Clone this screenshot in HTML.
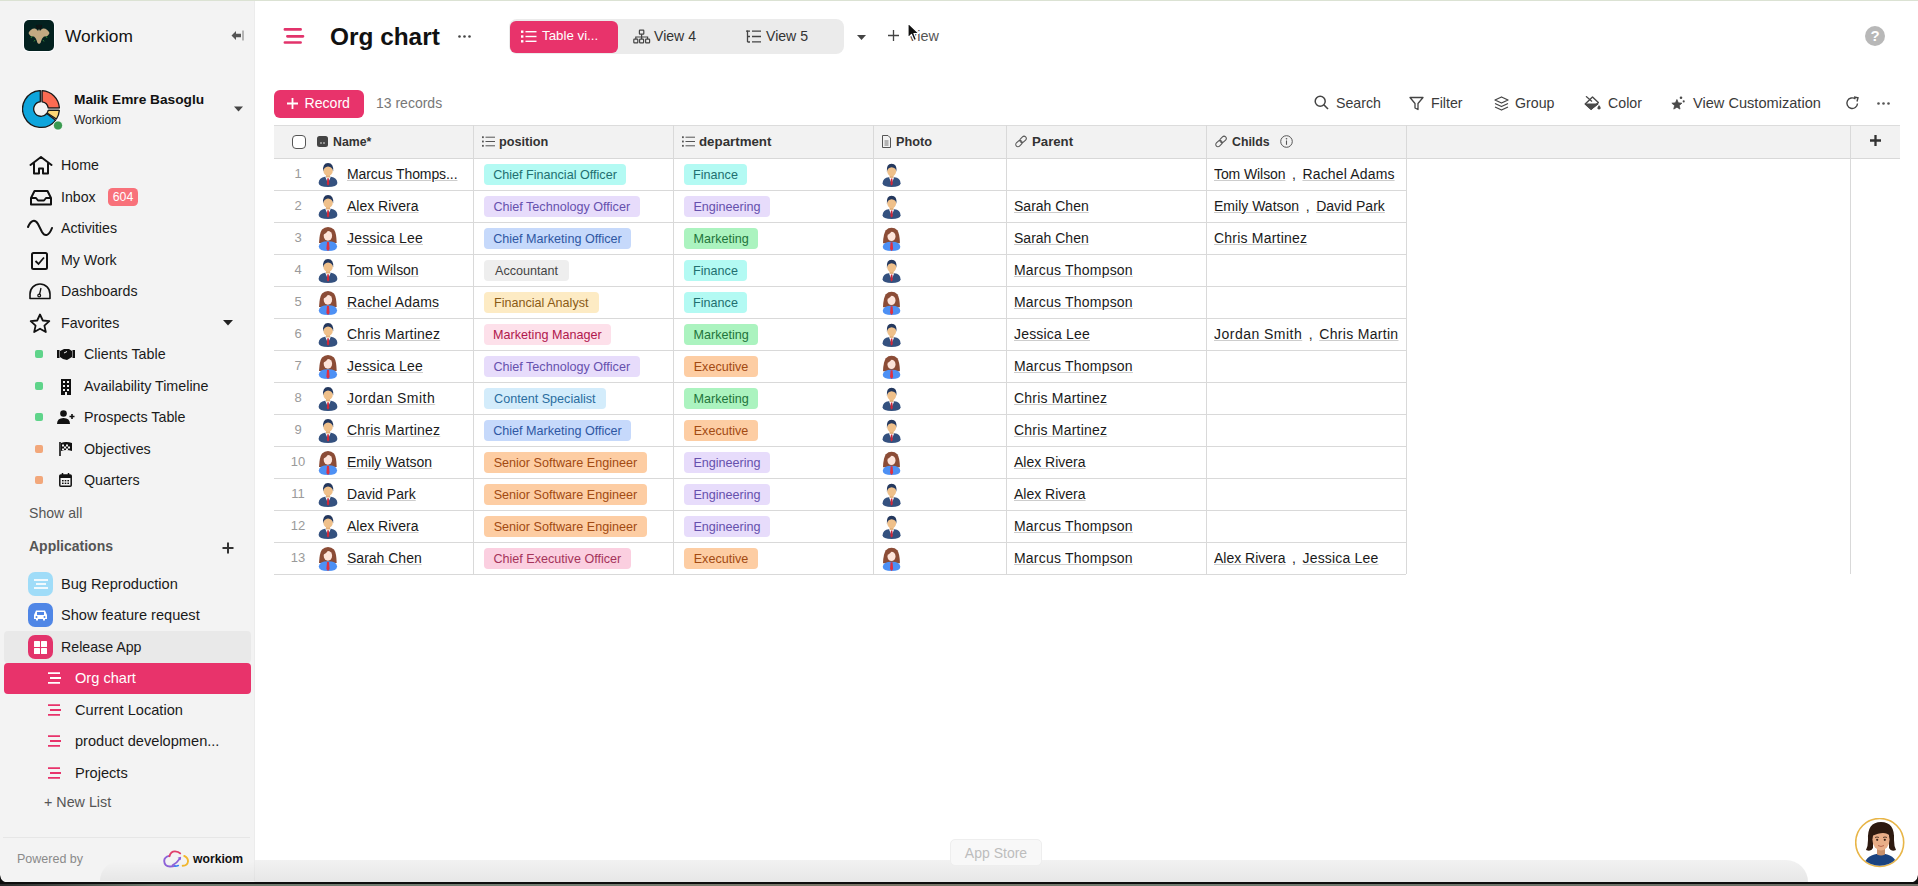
<!DOCTYPE html>
<html><head><meta charset="utf-8"><style>
*{box-sizing:border-box;margin:0;padding:0}
html,body{width:1918px;height:886px;overflow:hidden;background:#fff}
body{font-family:"Liberation Sans",sans-serif;color:#1f1f1f;position:relative}
.a{position:absolute;white-space:nowrap}
svg{display:block}
#sb{position:absolute;left:0;top:0;width:255px;height:886px;background:#f3f3f3}
.nav{font-size:14px;color:#1a1a1a;line-height:16px}
.tag{position:absolute;height:21px;line-height:21px;border-radius:4px;font-size:12.6px;padding:0 9px}
.th{position:absolute;top:126px;height:32px;line-height:32px;font-size:12.8px;font-weight:bold;color:#333}
.cell{position:absolute;font-size:14px;line-height:16px;color:#1a1a1a}
.ul{text-decoration:underline;text-decoration-color:#cdcdcd;text-decoration-thickness:1px;text-underline-offset:0.5px}
.num{position:absolute;font-size:13px;color:#9a9a9a;line-height:16px;text-align:center;width:30px}
.tb{font-size:14px;color:#3a3a3a;line-height:16px}
</style></head>
<body>
<div class="a" style="left:0;top:0;width:1918px;height:1px;background:#dbe2d3;z-index:5"></div>
<div id="sb"></div>
<div class="a" style="left:254px;top:0;width:1px;height:886px;background:#ececec"></div>
<div class="a" style="left:24px;top:20px;width:30px;height:31px;background:#03211f;border-radius:5px;box-shadow:0 0 0 1px #fdfdff;padding:1px">
<svg width="28" height="29" viewBox="0 2 28 29"><path d="M3.5 14 Q6 9 10 9.5 Q12 10 13 12 L14 10 L15 12 Q16 10 18 9.5 Q22 9 24.5 14 Q23 18 19 17.5 Q17 19 16.5 21 L15.5 24 L14 25 L12.5 24 L11.5 21 Q11 19 9 17.5 Q5 18 3.5 14Z" fill="#c2a882"/><path d="M11.5 6 l1.2 4 M14 5.5 v4 M16.5 6 l-1.2 4" stroke="#111" stroke-width="1.3"/><path d="M7 17 l-1 2 M21 17 l1 2 M10 21 l-1 1.5 M18 21 l1 1.5" stroke="#3a8a3a" stroke-width="0.9"/></svg></div>
<div class="a" style="left:65px;top:26px;font-size:17.3px;color:#111;line-height:20px">Workiom</div>
<div class="a" style="left:231px;top:30px;"><svg width="13" height="11" viewBox="0 0 13 11"><path d="M0.5 5.5 L5 1 V3.8 H10 V7.2 H5 V10 Z" fill="#555"/><rect x="11.5" y="0.5" width="1" height="10" fill="#777"/></svg></div>
<div class="a" style="left:22px;top:90px;"><svg width="42" height="42" viewBox="0 0 42 42">
<circle cx="19" cy="19" r="20" fill="#f6f6f6"/>
<circle cx="19" cy="19" r="18.2" fill="#b8b8b8"/>
<circle cx="19" cy="19" r="7.5" fill="#f2f2f2"/>
<path d="M18.3 0.61 A18.4 18.4 0 1 0 33.5 30.33 L24.75 23.5 A7.3 7.3 0 1 1 18.3 11.73 Z" fill="#0ea5dc" stroke="#1a1a1a" stroke-width="1.3" stroke-linejoin="round"/>
<path d="M20.1 0.63 A18.4 18.4 0 0 1 37.37 17.9 H26.22 A7.3 7.3 0 0 0 20.1 11.78Z" fill="#fb6b52" stroke="#1a1a1a" stroke-width="1.3" stroke-linejoin="round"/>
<path d="M37.35 20.4 A18.4 18.4 0 0 1 34.43 29.02 L25.12 22.98 A7.3 7.3 0 0 0 26.16 20.4Z" fill="#fdd675" stroke="#1a1a1a" stroke-width="1.3" stroke-linejoin="round"/>
<circle cx="36" cy="35.5" r="4.6" fill="#3a9a50" stroke="#fff" stroke-width="0.8"/>
</svg></div>
<div class="a" style="left:74px;top:92px;font-size:13.7px;font-weight:bold;color:#111;line-height:16px">Malik Emre Basoglu</div>
<div class="a" style="left:74px;top:113px;font-size:12px;color:#222;line-height:14px">Workiom</div>
<div class="a" style="left:234px;top:106px;"><svg width="9" height="6" viewBox="0 0 9 6"><path d="M0 0.5 H9 L4.5 5.5Z" fill="#444"/></svg></div>
<div class="a" style="left:61px;top:157px;font-size:14.2px;color:#1a1a1a;line-height:16px">Home</div>
<div class="a" style="left:29px;top:156px;"><svg width="24" height="20" viewBox="0 0 24 20"><path d="M1.5 9 L12 1 L22.5 9 M5 7.5 V17.5 H10 V12.5 H14 V17.5 H19 V7.5" fill="none" stroke="#111" stroke-width="2" stroke-linejoin="round" stroke-linecap="round"/></svg></div>
<div class="a" style="left:61px;top:189px;font-size:14.2px;color:#1a1a1a;line-height:16px">Inbox</div>
<div class="a" style="left:29px;top:189px;"><svg width="24" height="18" viewBox="0 0 24 18"><path d="M2 9 L5.5 2 H18.5 L22 9 V15.5 H2 Z M2 9 H7 L9 11.5 H15 L17 9 H22" fill="none" stroke="#111" stroke-width="2" stroke-linejoin="round"/></svg></div>
<div class="a" style="left:61px;top:220px;font-size:14.2px;color:#1a1a1a;line-height:16px">Activities</div>
<div class="a" style="left:27px;top:218px;"><svg width="26" height="20" viewBox="0 0 26 20"><path d="M1 9 C4 2 8 1 11 6 L15 14 C18 19 22 18 25 10" fill="none" stroke="#111" stroke-width="2" stroke-linecap="round"/></svg></div>
<div class="a" style="left:61px;top:252px;font-size:14.2px;color:#1a1a1a;line-height:16px">My Work</div>
<div class="a" style="left:30px;top:251px;"><svg width="20" height="20" viewBox="0 0 20 20"><rect x="2" y="2" width="15" height="16" rx="1.5" fill="none" stroke="#111" stroke-width="2"/><path d="M5.5 10 L8.5 13 L14 6.5" fill="none" stroke="#111" stroke-width="1.8"/></svg></div>
<div class="a" style="left:61px;top:283px;font-size:14.2px;color:#1a1a1a;line-height:16px">Dashboards</div>
<div class="a" style="left:28px;top:281px;"><svg width="24" height="20" viewBox="0 0 24 20"><path d="M2 17.5 V13 A10 10 0 0 1 22 13 V17.5 Z" fill="none" stroke="#111" stroke-width="1.6" stroke-linejoin="round"/><path d="M13 7 L11.5 13.5" stroke="#111" stroke-width="1.3"/><circle cx="11.2" cy="14.5" r="1.4" fill="none" stroke="#111" stroke-width="1.2"/></svg></div>
<div class="a" style="left:61px;top:315px;font-size:14.2px;color:#1a1a1a;line-height:16px">Favorites</div>
<div class="a" style="left:29px;top:313px;"><svg width="22" height="21" viewBox="0 0 22 21"><path d="M11 1.5 L13.8 7.5 L20.3 8.2 L15.4 12.6 L16.8 19 L11 15.7 L5.2 19 L6.6 12.6 L1.7 8.2 L8.2 7.5 Z" fill="none" stroke="#111" stroke-width="1.8" stroke-linejoin="round"/></svg></div>
<div class="a" style="left:108px;top:188px;width:30px;height:18px;line-height:19px;border-radius:4.5px;background:#f8717a;color:#fff;font-size:12.3px;text-align:center">604</div>
<div class="a" style="left:223px;top:320px;"><svg width="10" height="6" viewBox="0 0 10 6"><path d="M0 0 H10 L5 5.5Z" fill="#222"/></svg></div>
<div class="a" style="left:35px;top:350px;width:8px;height:8px;border-radius:2px;background:#5fd48a"></div>
<div class="a" style="left:57px;top:347px;"><svg width="18" height="14" viewBox="0 0 18 14"><rect x="0" y="3" width="2.5" height="8" fill="#111"/><rect x="15.5" y="3" width="2.5" height="8" fill="#111"/><path d="M3 4 L7 2 L12 2 L15 4 V10 L10 13 L6 12 L3 10Z" fill="#111"/><path d="M7 6 L10 4.5" stroke="#f2f2f2" stroke-width="1"/></svg></div>
<div class="a" style="left:84px;top:346px;font-size:14.3px;color:#1a1a1a;line-height:16px">Clients Table</div>
<div class="a" style="left:35px;top:382px;width:8px;height:8px;border-radius:2px;background:#5fd48a"></div>
<div class="a" style="left:59px;top:379px;"><svg width="14" height="16" viewBox="0 0 14 16"><rect x="2" y="0" width="10" height="16" fill="#111"/><g fill="#f2f2f2"><rect x="4" y="2" width="2" height="2"/><rect x="8" y="2" width="2" height="2"/><rect x="4" y="6" width="2" height="2"/><rect x="8" y="6" width="2" height="2"/><rect x="4" y="10" width="2" height="2"/><rect x="8" y="10" width="2" height="2"/><rect x="6" y="13" width="2" height="3"/></g></svg></div>
<div class="a" style="left:84px;top:378px;font-size:14.3px;color:#1a1a1a;line-height:16px">Availability Timeline</div>
<div class="a" style="left:35px;top:413px;width:8px;height:8px;border-radius:2px;background:#5fd48a"></div>
<div class="a" style="left:57px;top:410px;"><svg width="18" height="14" viewBox="0 0 18 14"><circle cx="6.5" cy="3.5" r="3.3" fill="#111"/><path d="M0 14 Q0 8 6.5 8 Q13 8 13 14Z" fill="#111"/><path d="M12.5 6.5 H17.5 M15 4 V9" stroke="#111" stroke-width="1.6"/></svg></div>
<div class="a" style="left:84px;top:409px;font-size:14.3px;color:#1a1a1a;line-height:16px">Prospects Table</div>
<div class="a" style="left:35px;top:445px;width:8px;height:8px;border-radius:2px;background:#f2a77a"></div>
<div class="a" style="left:59px;top:442px;"><svg width="14" height="14" viewBox="0 0 14 14"><path d="M1 0 V14" stroke="#111" stroke-width="1.6"/><path d="M2 1 Q7 -1 13 1 V9 Q7 7 2 9Z" fill="#111"/><g fill="#f2f2f2"><rect x="3" y="2.5" width="2" height="2"/><rect x="7" y="2.5" width="2" height="2"/><rect x="5" y="4.5" width="2" height="2"/><rect x="9" y="4.5" width="2" height="2"/><rect x="3" y="6.5" width="2" height="1.5"/><rect x="7" y="6.5" width="2" height="1.5"/></g></svg></div>
<div class="a" style="left:84px;top:441px;font-size:14.3px;color:#1a1a1a;line-height:16px">Objectives</div>
<div class="a" style="left:35px;top:476px;width:8px;height:8px;border-radius:2px;background:#f2a77a"></div>
<div class="a" style="left:59px;top:473px;"><svg width="13" height="14" viewBox="0 0 13 14"><rect x="0.8" y="2" width="11.4" height="11.2" rx="1" fill="none" stroke="#111" stroke-width="1.5"/><rect x="0.8" y="2" width="11.4" height="3" fill="#111"/><path d="M3.5 0 V3 M9.5 0 V3" stroke="#111" stroke-width="1.5"/><g fill="#111"><rect x="3" y="7" width="1.6" height="1.4"/><rect x="5.7" y="7" width="1.6" height="1.4"/><rect x="8.4" y="7" width="1.6" height="1.4"/><rect x="3" y="9.6" width="1.6" height="1.4"/><rect x="5.7" y="9.6" width="1.6" height="1.4"/><rect x="8.4" y="9.6" width="1.6" height="1.4"/></g></svg></div>
<div class="a" style="left:84px;top:472px;font-size:14.3px;color:#1a1a1a;line-height:16px">Quarters</div>
<div class="a" style="left:29px;top:505px;font-size:14.1px;color:#555;line-height:16px">Show all</div>
<div class="a" style="left:29px;top:538px;font-size:14px;font-weight:bold;color:#555;line-height:16px">Applications</div>
<div class="a" style="left:222px;top:542px;"><svg width="12" height="12" viewBox="0 0 12 12"><path d="M6 0.5 V11.5 M0.5 6 H11.5" stroke="#333" stroke-width="2"/></svg></div>
<div class="a" style="left:4px;top:631px;width:247px;height:32px;background:#e9e9e9;border-radius:4px"></div>
<div class="a" style="left:4px;top:663px;width:247px;height:31px;background:#e8336b;border-radius:4px"></div>
<div class="a" style="left:28px;top:572px;"><div style="width:25px;height:24px;border-radius:7px;background:#9fdcf8;display:flex;align-items:center;justify-content:center"><svg width="14" height="10" viewBox="0 0 14 10"><path d="M0 1 H14 M2 5 H12 M0 9 H14" stroke="#fff" stroke-width="1.8" opacity="0.85"/></svg></div></div>
<div class="a" style="left:61px;top:576px;font-size:14.6px;color:#1a1a1a;line-height:16px">Bug Reproduction</div>
<div class="a" style="left:28px;top:603px;"><div style="width:25px;height:24px;border-radius:7px;background:#4f86e6;display:flex;align-items:center;justify-content:center"><svg width="15" height="12" viewBox="0 0 15 12"><path d="M1 6 L3 1.5 H12 L14 6 V10 H12 V11.5 H10 V10 H5 V11.5 H3 V10 H1 Z" fill="#fff"/><rect x="4" y="3" width="7" height="3" fill="#4f86e6"/><circle cx="3.5" cy="8" r="1" fill="#4f86e6"/><circle cx="11.5" cy="8" r="1" fill="#4f86e6"/></svg></div></div>
<div class="a" style="left:61px;top:607px;font-size:14.6px;color:#1a1a1a;line-height:16px">Show feature request</div>
<div class="a" style="left:28px;top:635px;"><div style="width:25px;height:24px;border-radius:7px;background:#e3336b;display:flex;align-items:center;justify-content:center"><svg width="13" height="13" viewBox="0 0 13 13"><rect x="0" y="0" width="6" height="6" rx="0.5" fill="#fff"/><rect x="7" y="0" width="6" height="6" rx="0.5" fill="#fff"/><rect x="0" y="7" width="6" height="6" rx="0.5" fill="#fff"/><rect x="7" y="7" width="6" height="6" rx="0.5" fill="#fff"/></svg></div></div>
<div class="a" style="left:61px;top:639px;font-size:14.2px;color:#1a1a1a;line-height:16px">Release App</div>
<div class="a" style="left:47px;top:672px;"><svg width="15" height="12" viewBox="0 0 15 12"><path d="M1 1.2 H13 M3 6 H14 M1 10.8 H13" stroke="#fff" stroke-width="1.8"/></svg></div>
<div class="a" style="left:75px;top:670px;font-size:14.6px;color:#fff;line-height:16px">Org chart</div>
<div class="a" style="left:47px;top:704px;"><svg width="15" height="12" viewBox="0 0 15 12"><path d="M1 1.2 H13 M3 6 H14 M1 10.8 H13" stroke="#e8336b" stroke-width="1.8"/></svg></div>
<div class="a" style="left:75px;top:702px;font-size:14.6px;color:#1a1a1a;line-height:16px">Current Location</div>
<div class="a" style="left:47px;top:735px;"><svg width="15" height="12" viewBox="0 0 15 12"><path d="M1 1.2 H13 M3 6 H14 M1 10.8 H13" stroke="#e8336b" stroke-width="1.8"/></svg></div>
<div class="a" style="left:75px;top:733px;font-size:14.6px;color:#1a1a1a;line-height:16px">product developmen...</div>
<div class="a" style="left:47px;top:767px;"><svg width="15" height="12" viewBox="0 0 15 12"><path d="M1 1.2 H13 M3 6 H14 M1 10.8 H13" stroke="#e8336b" stroke-width="1.8"/></svg></div>
<div class="a" style="left:75px;top:765px;font-size:14.6px;color:#1a1a1a;line-height:16px">Projects</div>
<div class="a" style="left:44px;top:794px;font-size:14.3px;color:#555;line-height:16px">+ New List</div>
<div class="a" style="left:3px;top:837px;width:247px;height:1px;background:#e6e6e6"></div>
<div class="a" style="left:17px;top:852px;font-size:12.5px;color:#8a8a8a;line-height:14px">Powered by</div>
<div class="a" style="left:163px;top:850px;"><svg width="27" height="19" viewBox="0 0 27 19"><path d="M6.4 5.9 Q1.2 7 1.2 11 Q1.5 16.5 7 16.5 Q10 16.5 11.8 15.8" fill="none" stroke="#8e62d9" stroke-width="1.9" stroke-linecap="round"/><path d="M6.4 6.2 Q8 1.3 12 1.4 Q15.5 1.6 17.2 3.4" fill="none" stroke="#e0406a" stroke-width="1.9" stroke-linecap="round"/><path d="M9.5 15.3 Q14 13 17.3 8" fill="none" stroke="#8e62d9" stroke-width="1.7" stroke-linecap="round"/><path d="M14.6 7.8 L18 6.7 L17.6 10.3Z" fill="#8e62d9"/><path d="M11.8 16.1 Q13.5 16.3 15.3 15.5" fill="none" stroke="#3b82f6" stroke-width="1.6" stroke-linecap="round"/><path d="M21.2 5.9 Q25.2 8 25 11.5 Q24.5 15.5 19.7 15.8" fill="none" stroke="#f2b72c" stroke-width="1.9" stroke-linecap="round"/></svg></div>
<div class="a" style="left:193px;top:852px;font-size:12.2px;font-weight:bold;color:#111;line-height:14px">workiom</div>
<div class="a" style="left:283px;top:27px;"><svg width="22" height="18" viewBox="0 0 22 18"><path d="M1.9 2.4 H17.6 M4.4 9.3 H20 M1.9 15.5 H17.6" stroke="#e2336b" stroke-width="2.7" stroke-linecap="round"/></svg></div>
<div class="a" style="left:330px;top:23px;font-size:24.4px;font-weight:bold;color:#111;line-height:28px">Org chart</div>
<div class="a" style="left:458px;top:35px;"><svg width="13" height="3" viewBox="0 0 13 3"><circle cx="1.5" cy="1.5" r="1.3" fill="#444"/><circle cx="6.5" cy="1.5" r="1.3" fill="#444"/><circle cx="11.5" cy="1.5" r="1.3" fill="#444"/></svg></div>
<div class="a" style="left:509px;top:19px;width:335px;height:35px;background:#ebebeb;border-radius:8px"></div>
<div class="a" style="left:510px;top:21px;width:108px;height:32px;background:#e8336b;border-radius:6px"></div>
<div class="a" style="left:521px;top:30px;"><svg width="16" height="13" viewBox="0 0 16 13"><g fill="#fff"><rect x="0" y="0.5" width="2.4" height="2.4"/><rect x="0" y="5.3" width="2.4" height="2.4"/><rect x="0" y="10.1" width="2.4" height="2.4"/><rect x="4.5" y="1" width="11" height="1.4"/><rect x="4.5" y="5.8" width="11" height="1.4"/><rect x="4.5" y="10.6" width="11" height="1.4"/></g></svg></div>
<div class="a" style="left:542px;top:28px;font-size:13.3px;color:#fff;line-height:16px">Table vi...</div>
<div class="a" style="left:633px;top:29px;"><svg width="18" height="15" viewBox="0 0 18 15"><rect x="6.4" y="1.2" width="4.4" height="4" rx="0.6" fill="none" stroke="#444" stroke-width="1.2"/><path d="M8.6 5.2 V8 M2.8 10 V8 H14.6 V10 M8.6 8 V10" fill="none" stroke="#444" stroke-width="1.2"/><rect x="0.8" y="10.2" width="4" height="3.6" rx="0.6" fill="none" stroke="#444" stroke-width="1.2"/><rect x="6.6" y="10.2" width="4" height="3.6" rx="0.6" fill="none" stroke="#444" stroke-width="1.2"/><rect x="12.6" y="10.2" width="4" height="3.6" rx="0.6" fill="none" stroke="#444" stroke-width="1.2"/></svg></div>
<div class="a" style="left:654px;top:28px;font-size:14.1px;color:#333;line-height:16px">View 4</div>
<div class="a" style="left:746px;top:30px;"><svg width="15" height="13" viewBox="0 0 15 13"><path d="M1.5 0.5 V12 M1.5 6.5 H4 M1.5 12 H4" fill="none" stroke="#444" stroke-width="1.3"/><path d="M0 1.2 H4 M6 1.2 H15 M6 6.5 H15 M6 11.8 H15" stroke="#444" stroke-width="1.3"/></svg></div>
<div class="a" style="left:766px;top:28px;font-size:14.1px;color:#333;line-height:16px">View 5</div>
<div class="a" style="left:857px;top:35px;"><svg width="9" height="5" viewBox="0 0 9 5"><path d="M0 0 H9 L4.5 5Z" fill="#444"/></svg></div>
<div class="a" style="left:888px;top:30px;"><svg width="11" height="11" viewBox="0 0 11 11"><path d="M5.5 0 V11 M0 5.5 H11" stroke="#444" stroke-width="1.3"/></svg></div>
<div class="a" style="left:908px;top:28px;font-size:14.4px;color:#555;line-height:16px">View</div>
<div class="a" style="left:907px;top:22px;"><svg width="14" height="20" viewBox="0 0 14 20"><path d="M1 1 L1 16 L4.5 12.5 L7 18.5 L9.5 17.5 L7 11.5 L12 11.5 Z" fill="#111" stroke="#fff" stroke-width="1.2" stroke-linejoin="round"/></svg></div>
<div class="a" style="left:1865px;top:26px;"><div style="width:20px;height:20px;border-radius:50%;background:#b8b8b8;color:#fff;font-size:15px;font-weight:bold;text-align:center;line-height:20px">?</div></div>
<div class="a" style="left:274px;top:90px;"><div style="width:90px;height:28px;border-radius:6px;background:#e8336b;position:relative"><svg style="position:absolute;left:13px;top:8px" width="11" height="11" viewBox="0 0 11 11"><path d="M5.5 0 V11 M0 5.5 H11" stroke="#fff" stroke-width="1.8"/></svg><span style="position:absolute;left:30.5px;top:5px;font-size:14.1px;color:#fff;line-height:16px">Record</span></div></div>
<div class="a" style="left:376px;top:95px;font-size:14px;color:#777;line-height:16px">13 records</div>
<div class="a" style="left:1314px;top:95px;"><svg width="15" height="15" viewBox="0 0 15 15"><circle cx="6.2" cy="6.2" r="5" fill="none" stroke="#444" stroke-width="1.5"/><path d="M9.8 9.8 L14 14" stroke="#444" stroke-width="1.6"/></svg></div>
<div class="a" style="left:1336px;top:95px;font-size:14.2px;color:#3a3a3a;line-height:16px">Search</div>
<div class="a" style="left:1409px;top:96px;"><svg width="15" height="15" viewBox="0 0 15 15"><path d="M1 1.5 H14 L9 7.5 V13.5 L6 12 V7.5 Z" fill="none" stroke="#444" stroke-width="1.3" stroke-linejoin="round"/></svg></div>
<div class="a" style="left:1431px;top:95px;font-size:14.2px;color:#3a3a3a;line-height:16px">Filter</div>
<div class="a" style="left:1494px;top:96px;"><svg width="15" height="15" viewBox="0 0 15 15"><path d="M7.5 1 L14 4 L7.5 7 L1 4 Z" fill="none" stroke="#444" stroke-width="1.3" stroke-linejoin="round"/><path d="M1 7.5 L7.5 10.5 L14 7.5 M1 11 L7.5 14 L14 11" fill="none" stroke="#444" stroke-width="1.3" stroke-linejoin="round"/></svg></div>
<div class="a" style="left:1515px;top:95px;font-size:14.2px;color:#3a3a3a;line-height:16px">Group</div>
<div class="a" style="left:1584px;top:96px;"><svg width="17" height="15" viewBox="0 0 17 15"><path d="M1.2 8 L8.5 0.9 L14.3 6.6 L7.1 13.2 Z" fill="none" stroke="#4a4a4a" stroke-width="1.4" stroke-linejoin="round"/><path d="M1 8 H14.2 L7.1 13.4 Z" fill="#4a4a4a" stroke="#4a4a4a" stroke-width="1" stroke-linejoin="round"/><path d="M2 0.3 L8 5.6" stroke="#4a4a4a" stroke-width="1.3"/><path d="M15 8.9 Q17.2 11.6 16.6 12.6 Q15 14.3 13.4 12.6 Q12.9 11.6 15 8.9Z" fill="#4a4a4a"/></svg></div>
<div class="a" style="left:1608px;top:95px;font-size:14.2px;color:#3a3a3a;line-height:16px">Color</div>
<div class="a" style="left:1671px;top:96px;"><svg width="16" height="15" viewBox="0 0 16 15"><path d="M5.90 3.50 L7.31 6.86 L10.94 7.16 L8.18 9.54 L9.02 13.09 L5.90 11.20 L2.78 13.09 L3.62 9.54 L0.86 7.16 L4.49 6.86Z" fill="#4a4a4a" stroke="#4a4a4a" stroke-width="0.8" stroke-linejoin="round"/><circle cx="10" cy="1.7" r="1.3" fill="#4a4a4a"/><circle cx="12.7" cy="5.4" r="1.05" fill="#4a4a4a"/></svg></div>
<div class="a" style="left:1693px;top:95px;font-size:14.6px;color:#3a3a3a;line-height:16px">View Customization</div>
<div class="a" style="left:1845px;top:96px;"><svg width="15" height="15" viewBox="0 0 15 15"><path d="M12.5 7.5 A5.3 5.3 0 1 1 10.5 3" fill="none" stroke="#444" stroke-width="1.4"/><path d="M9 1 L13 1.8 L12 5.5" fill="none" stroke="#444" stroke-width="1.4"/></svg></div>
<div class="a" style="left:1877px;top:102px;"><svg width="13" height="3" viewBox="0 0 13 3"><circle cx="1.5" cy="1.5" r="1.3" fill="#555"/><circle cx="6.5" cy="1.5" r="1.3" fill="#555"/><circle cx="11.5" cy="1.5" r="1.3" fill="#555"/></svg></div>
<div class="a" style="left:274px;top:125px;width:1626px;height:34px;background:#f2f2f2;border-top:1px solid #dcdcdc;border-bottom:1px solid #d8d8d8"></div>
<div class="a" style="left:473px;top:125px;width:1px;height:449px;background:#d9d9d9"></div>
<div class="a" style="left:673px;top:125px;width:1px;height:449px;background:#d9d9d9"></div>
<div class="a" style="left:873px;top:125px;width:1px;height:449px;background:#d9d9d9"></div>
<div class="a" style="left:1006px;top:125px;width:1px;height:449px;background:#d9d9d9"></div>
<div class="a" style="left:1206px;top:125px;width:1px;height:449px;background:#d9d9d9"></div>
<div class="a" style="left:1406px;top:125px;width:1px;height:449px;background:#d9d9d9"></div>
<div class="a" style="left:1850px;top:125px;width:1px;height:449px;background:#d9d9d9"></div>
<div class="a" style="left:274px;top:190px;width:1132px;height:1px;background:#d9d9d9"></div>
<div class="a" style="left:274px;top:222px;width:1132px;height:1px;background:#d9d9d9"></div>
<div class="a" style="left:274px;top:254px;width:1132px;height:1px;background:#d9d9d9"></div>
<div class="a" style="left:274px;top:286px;width:1132px;height:1px;background:#d9d9d9"></div>
<div class="a" style="left:274px;top:318px;width:1132px;height:1px;background:#d9d9d9"></div>
<div class="a" style="left:274px;top:350px;width:1132px;height:1px;background:#d9d9d9"></div>
<div class="a" style="left:274px;top:382px;width:1132px;height:1px;background:#d9d9d9"></div>
<div class="a" style="left:274px;top:414px;width:1132px;height:1px;background:#d9d9d9"></div>
<div class="a" style="left:274px;top:446px;width:1132px;height:1px;background:#d9d9d9"></div>
<div class="a" style="left:274px;top:478px;width:1132px;height:1px;background:#d9d9d9"></div>
<div class="a" style="left:274px;top:510px;width:1132px;height:1px;background:#d9d9d9"></div>
<div class="a" style="left:274px;top:542px;width:1132px;height:1px;background:#d9d9d9"></div>
<div class="a" style="left:274px;top:574px;width:1132px;height:1px;background:#d9d9d9"></div>
<div class="a" style="left:292px;top:135px;width:14px;height:14px;border:1px solid #555;border-radius:4px;background:#fff"></div>
<div class="a" style="left:317px;top:136px;"><svg width="11" height="11" viewBox="0 0 11 11"><rect width="11" height="11" rx="2.5" fill="#444"/><path d="M3 7 H5 M6 7 H8" stroke="#ddd" stroke-width="1.2"/></svg></div>
<div class="a" style="left:333px;top:126px;font-size:12.3px;font-weight:bold;color:#333;line-height:32px">Name*</div>
<div class="a" style="left:482px;top:136px;"><svg width="13" height="11" viewBox="0 0 13 11"><g fill="#555"><rect x="0" y="0.3" width="1.8" height="1.8"/><rect x="0" y="4.6" width="1.8" height="1.8"/><rect x="0" y="8.9" width="1.8" height="1.8"/></g><path d="M3.5 1.2 H13 M3.5 5.5 H13 M3.5 9.8 H13" stroke="#555" stroke-width="1"/></svg></div>
<div class="a" style="left:499px;top:126px;font-size:12.7px;font-weight:bold;color:#333;line-height:32px">position</div>
<div class="a" style="left:682px;top:136px;"><svg width="13" height="11" viewBox="0 0 13 11"><g fill="#555"><rect x="0" y="0.3" width="1.8" height="1.8"/><rect x="0" y="4.6" width="1.8" height="1.8"/><rect x="0" y="8.9" width="1.8" height="1.8"/></g><path d="M3.5 1.2 H13 M3.5 5.5 H13 M3.5 9.8 H13" stroke="#555" stroke-width="1"/></svg></div>
<div class="a" style="left:699px;top:126px;font-size:13.3px;font-weight:bold;color:#333;line-height:32px">department</div>
<div class="a" style="left:882px;top:135px;"><svg width="9" height="13" viewBox="0 0 9 13"><path d="M0.5 0.5 H6 L8.5 3 V12.5 H0.5 Z" fill="none" stroke="#555" stroke-width="1"/><path d="M2.5 6 H6.5 M2.5 8 H6.5 M2.5 10 H6.5" stroke="#555" stroke-width="0.8"/></svg></div>
<div class="a" style="left:896px;top:126px;font-size:12.7px;font-weight:bold;color:#333;line-height:32px">Photo</div>
<div class="a" style="left:1014px;top:135px;"><svg width="14" height="13" viewBox="0 0 14 13"><g transform="rotate(-45 7 6.5)"><rect x="0.5" y="4.3" width="7.2" height="4.4" rx="2.2" fill="none" stroke="#555" stroke-width="1.05"/><rect x="6.3" y="4.3" width="7.2" height="4.4" rx="2.2" fill="none" stroke="#555" stroke-width="1.05"/></g></svg></div>
<div class="a" style="left:1032px;top:126px;font-size:13.2px;font-weight:bold;color:#333;line-height:32px">Parent</div>
<div class="a" style="left:1214px;top:135px;"><svg width="14" height="13" viewBox="0 0 14 13"><g transform="rotate(-45 7 6.5)"><rect x="0.5" y="4.3" width="7.2" height="4.4" rx="2.2" fill="none" stroke="#555" stroke-width="1.05"/><rect x="6.3" y="4.3" width="7.2" height="4.4" rx="2.2" fill="none" stroke="#555" stroke-width="1.05"/></g></svg></div>
<div class="a" style="left:1232px;top:126px;font-size:12.3px;font-weight:bold;color:#333;line-height:32px">Childs</div>
<div class="a" style="left:1280px;top:135px;"><svg width="13" height="13" viewBox="0 0 13 13"><circle cx="6.5" cy="6.5" r="5.8" fill="none" stroke="#555" stroke-width="1"/><circle cx="6.5" cy="3.8" r="0.8" fill="#555"/><path d="M6.5 5.5 V9.8" stroke="#555" stroke-width="1.1"/></svg></div>
<div class="a" style="left:1870px;top:135px;"><svg width="11" height="11" viewBox="0 0 11 11"><path d="M5.5 0.3 V10.7 M0.3 5.5 H10.7" stroke="#333" stroke-width="2.3" stroke-linecap="round"/></svg></div>
<div class="a" style="left:283px;top:166px;width:30px;text-align:center;font-size:13px;color:#9a9a9a;line-height:16px">1</div>
<div class="a" style="left:318px;top:161px;"><svg width="24" height="26" viewBox="4 1 24 26"><path d="M4.6 23 Q5 17.5 11 16.8 H17 Q23 17.5 23.4 23 Q23 27 14 27 Q5 27 4.6 23Z" fill="#34517f"/><path d="M11.2 16.8 H16.8 L14 23Z" fill="#fff"/><path d="M13.3 18.3 H14.8 L15.3 24 L14 25.8 L12.8 24Z" fill="#cf2839"/><rect x="12" y="13" width="4" height="4.5" fill="#e3ae78"/><ellipse cx="14.1" cy="10.4" rx="4.7" ry="5.4" fill="#efc08a"/><path d="M9.1 11.5 Q8.3 2.9 14 2.9 Q19.9 2.9 19.2 11.5 Q18.6 6.6 14 6.4 Q9.8 6.6 9.1 11.5Z" fill="#24385e"/></svg></div>
<div class="a" style="left:347px;top:166px;font-size:14px;color:#1a1a1a;line-height:16px"><span class="ul" style="letter-spacing:-0.082px;">Marcus Thomps...</span></div>
<div class="a" style="left:484px;top:164px;width:142px;text-align:center;height:21px;line-height:23px;border-radius:4px;background:#b3faf3;color:#226f70;font-size:12.6px">Chief Financial Officer</div>
<div class="a" style="left:684px;top:164px;width:63px;text-align:center;height:21px;line-height:23px;border-radius:4px;background:#b3faf3;color:#226f70;font-size:12.6px">Finance</div>
<div class="a" style="left:882px;top:162px;"><svg width="23" height="25" viewBox="4 1 24 26"><path d="M4.6 23 Q5 17.5 11 16.8 H17 Q23 17.5 23.4 23 Q23 27 14 27 Q5 27 4.6 23Z" fill="#34517f"/><path d="M11.2 16.8 H16.8 L14 23Z" fill="#fff"/><path d="M13.3 18.3 H14.8 L15.3 24 L14 25.8 L12.8 24Z" fill="#cf2839"/><rect x="12" y="13" width="4" height="4.5" fill="#e3ae78"/><ellipse cx="14.1" cy="10.4" rx="4.7" ry="5.4" fill="#efc08a"/><path d="M9.1 11.5 Q8.3 2.9 14 2.9 Q19.9 2.9 19.2 11.5 Q18.6 6.6 14 6.4 Q9.8 6.6 9.1 11.5Z" fill="#24385e"/></svg></div>
<div class="a" style="left:1214px;top:166px;font-size:14px;color:#1a1a1a;line-height:16px;width:192px;height:19px;overflow:hidden"><span class="ul" style="letter-spacing:-0.092px;">Tom Wilson</span><span style="display:inline-block;width:17px;text-align:center">,</span><span class="ul" style="letter-spacing:0.159px;">Rachel Adams</span></div>
<div class="a" style="left:283px;top:198px;width:30px;text-align:center;font-size:13px;color:#9a9a9a;line-height:16px">2</div>
<div class="a" style="left:318px;top:193px;"><svg width="24" height="26" viewBox="4 1 24 26"><path d="M4.6 23 Q5 17.5 11 16.8 H17 Q23 17.5 23.4 23 Q23 27 14 27 Q5 27 4.6 23Z" fill="#34517f"/><path d="M11.2 16.8 H16.8 L14 23Z" fill="#fff"/><path d="M13.3 18.3 H14.8 L15.3 24 L14 25.8 L12.8 24Z" fill="#cf2839"/><rect x="12" y="13" width="4" height="4.5" fill="#e3ae78"/><ellipse cx="14.1" cy="10.4" rx="4.7" ry="5.4" fill="#efc08a"/><path d="M9.1 11.5 Q8.3 2.9 14 2.9 Q19.9 2.9 19.2 11.5 Q18.6 6.6 14 6.4 Q9.8 6.6 9.1 11.5Z" fill="#24385e"/></svg></div>
<div class="a" style="left:347px;top:198px;font-size:14px;color:#1a1a1a;line-height:16px"><span class="ul" style="letter-spacing:-0.006px;">Alex Rivera</span></div>
<div class="a" style="left:484px;top:196px;width:155.5px;text-align:center;height:21px;line-height:23px;border-radius:4px;background:#e7dcfb;color:#6650ad;font-size:12.6px">Chief Technology Officer</div>
<div class="a" style="left:684px;top:196px;width:86px;text-align:center;height:21px;line-height:23px;border-radius:4px;background:#e7dcfb;color:#6650ad;font-size:12.6px">Engineering</div>
<div class="a" style="left:882px;top:194px;"><svg width="23" height="25" viewBox="4 1 24 26"><path d="M4.6 23 Q5 17.5 11 16.8 H17 Q23 17.5 23.4 23 Q23 27 14 27 Q5 27 4.6 23Z" fill="#34517f"/><path d="M11.2 16.8 H16.8 L14 23Z" fill="#fff"/><path d="M13.3 18.3 H14.8 L15.3 24 L14 25.8 L12.8 24Z" fill="#cf2839"/><rect x="12" y="13" width="4" height="4.5" fill="#e3ae78"/><ellipse cx="14.1" cy="10.4" rx="4.7" ry="5.4" fill="#efc08a"/><path d="M9.1 11.5 Q8.3 2.9 14 2.9 Q19.9 2.9 19.2 11.5 Q18.6 6.6 14 6.4 Q9.8 6.6 9.1 11.5Z" fill="#24385e"/></svg></div>
<div class="a" style="left:1014px;top:198px;font-size:14px;color:#1a1a1a;line-height:16px"><span class="ul" style="letter-spacing:0.001px;">Sarah Chen</span></div>
<div class="a" style="left:1214px;top:198px;font-size:14px;color:#1a1a1a;line-height:16px;width:192px;height:19px;overflow:hidden"><span class="ul" style="letter-spacing:0.005px;">Emily Watson</span><span style="display:inline-block;width:17px;text-align:center">,</span><span class="ul" style="letter-spacing:0.027px;">David Park</span></div>
<div class="a" style="left:283px;top:230px;width:30px;text-align:center;font-size:13px;color:#9a9a9a;line-height:16px">3</div>
<div class="a" style="left:318px;top:225px;"><svg width="24" height="26" viewBox="4 1 24 26"><path d="M5 19 Q5.5 9 8 5.5 Q10.5 2.9 14 2.9 Q17.5 2.9 20 5.5 Q22.5 9 22.7 19Z" fill="#8b4c36"/><path d="M4.8 22.5 Q5.2 17.3 14 17.3 Q22.8 17.3 23.1 22.5 Q23 27 14 27 Q5 27 4.8 22.5Z" fill="#4d90f4"/><path d="M13 18 H15 L15.6 25 L14 27 L12.4 25Z" fill="#e0303f"/><ellipse cx="13.9" cy="11.8" rx="4.2" ry="4.9" fill="#fde4da"/><path d="M9.6 10.5 Q10 6 14.2 6.4 Q12.5 9 9.6 10.5Z" fill="#8b4c36"/></svg></div>
<div class="a" style="left:347px;top:230px;font-size:14px;color:#1a1a1a;line-height:16px"><span class="ul" style="letter-spacing:0.189px;">Jessica Lee</span></div>
<div class="a" style="left:484px;top:228px;width:147px;text-align:center;height:21px;line-height:23px;border-radius:4px;background:#c6d9fb;color:#2f57a3;font-size:12.6px">Chief Marketing Officer</div>
<div class="a" style="left:684px;top:228px;width:74.3px;text-align:center;height:21px;line-height:23px;border-radius:4px;background:#abf3bf;color:#1f733b;font-size:12.6px">Marketing</div>
<div class="a" style="left:882px;top:226px;"><svg width="23" height="25" viewBox="4 1 24 26"><path d="M5 19 Q5.5 9 8 5.5 Q10.5 2.9 14 2.9 Q17.5 2.9 20 5.5 Q22.5 9 22.7 19Z" fill="#8b4c36"/><path d="M4.8 22.5 Q5.2 17.3 14 17.3 Q22.8 17.3 23.1 22.5 Q23 27 14 27 Q5 27 4.8 22.5Z" fill="#4d90f4"/><path d="M13 18 H15 L15.6 25 L14 27 L12.4 25Z" fill="#e0303f"/><ellipse cx="13.9" cy="11.8" rx="4.2" ry="4.9" fill="#fde4da"/><path d="M9.6 10.5 Q10 6 14.2 6.4 Q12.5 9 9.6 10.5Z" fill="#8b4c36"/></svg></div>
<div class="a" style="left:1014px;top:230px;font-size:14px;color:#1a1a1a;line-height:16px"><span class="ul" style="letter-spacing:0.001px;">Sarah Chen</span></div>
<div class="a" style="left:1214px;top:230px;font-size:14px;color:#1a1a1a;line-height:16px;width:192px;height:19px;overflow:hidden"><span class="ul" style="letter-spacing:0.215px;">Chris Martinez</span></div>
<div class="a" style="left:283px;top:262px;width:30px;text-align:center;font-size:13px;color:#9a9a9a;line-height:16px">4</div>
<div class="a" style="left:318px;top:257px;"><svg width="24" height="26" viewBox="4 1 24 26"><path d="M4.6 23 Q5 17.5 11 16.8 H17 Q23 17.5 23.4 23 Q23 27 14 27 Q5 27 4.6 23Z" fill="#34517f"/><path d="M11.2 16.8 H16.8 L14 23Z" fill="#fff"/><path d="M13.3 18.3 H14.8 L15.3 24 L14 25.8 L12.8 24Z" fill="#cf2839"/><rect x="12" y="13" width="4" height="4.5" fill="#e3ae78"/><ellipse cx="14.1" cy="10.4" rx="4.7" ry="5.4" fill="#efc08a"/><path d="M9.1 11.5 Q8.3 2.9 14 2.9 Q19.9 2.9 19.2 11.5 Q18.6 6.6 14 6.4 Q9.8 6.6 9.1 11.5Z" fill="#24385e"/></svg></div>
<div class="a" style="left:347px;top:262px;font-size:14px;color:#1a1a1a;line-height:16px"><span class="ul" style="letter-spacing:-0.092px;">Tom Wilson</span></div>
<div class="a" style="left:484px;top:260px;width:85px;text-align:center;height:21px;line-height:23px;border-radius:4px;background:#eeeeee;color:#444;font-size:12.6px">Accountant</div>
<div class="a" style="left:684px;top:260px;width:63px;text-align:center;height:21px;line-height:23px;border-radius:4px;background:#b3faf3;color:#226f70;font-size:12.6px">Finance</div>
<div class="a" style="left:882px;top:258px;"><svg width="23" height="25" viewBox="4 1 24 26"><path d="M4.6 23 Q5 17.5 11 16.8 H17 Q23 17.5 23.4 23 Q23 27 14 27 Q5 27 4.6 23Z" fill="#34517f"/><path d="M11.2 16.8 H16.8 L14 23Z" fill="#fff"/><path d="M13.3 18.3 H14.8 L15.3 24 L14 25.8 L12.8 24Z" fill="#cf2839"/><rect x="12" y="13" width="4" height="4.5" fill="#e3ae78"/><ellipse cx="14.1" cy="10.4" rx="4.7" ry="5.4" fill="#efc08a"/><path d="M9.1 11.5 Q8.3 2.9 14 2.9 Q19.9 2.9 19.2 11.5 Q18.6 6.6 14 6.4 Q9.8 6.6 9.1 11.5Z" fill="#24385e"/></svg></div>
<div class="a" style="left:1014px;top:262px;font-size:14px;color:#1a1a1a;line-height:16px"><span class="ul" style="letter-spacing:0.212px;">Marcus Thompson</span></div>
<div class="a" style="left:283px;top:294px;width:30px;text-align:center;font-size:13px;color:#9a9a9a;line-height:16px">5</div>
<div class="a" style="left:318px;top:289px;"><svg width="24" height="26" viewBox="4 1 24 26"><path d="M5 19 Q5.5 9 8 5.5 Q10.5 2.9 14 2.9 Q17.5 2.9 20 5.5 Q22.5 9 22.7 19Z" fill="#8b4c36"/><path d="M4.8 22.5 Q5.2 17.3 14 17.3 Q22.8 17.3 23.1 22.5 Q23 27 14 27 Q5 27 4.8 22.5Z" fill="#4d90f4"/><path d="M13 18 H15 L15.6 25 L14 27 L12.4 25Z" fill="#e0303f"/><ellipse cx="13.9" cy="11.8" rx="4.2" ry="4.9" fill="#fde4da"/><path d="M9.6 10.5 Q10 6 14.2 6.4 Q12.5 9 9.6 10.5Z" fill="#8b4c36"/></svg></div>
<div class="a" style="left:347px;top:294px;font-size:14px;color:#1a1a1a;line-height:16px"><span class="ul" style="letter-spacing:0.159px;">Rachel Adams</span></div>
<div class="a" style="left:484px;top:292px;width:114.5px;text-align:center;height:21px;line-height:23px;border-radius:4px;background:#fdebc4;color:#8a5a16;font-size:12.6px">Financial Analyst</div>
<div class="a" style="left:684px;top:292px;width:63px;text-align:center;height:21px;line-height:23px;border-radius:4px;background:#b3faf3;color:#226f70;font-size:12.6px">Finance</div>
<div class="a" style="left:882px;top:290px;"><svg width="23" height="25" viewBox="4 1 24 26"><path d="M5 19 Q5.5 9 8 5.5 Q10.5 2.9 14 2.9 Q17.5 2.9 20 5.5 Q22.5 9 22.7 19Z" fill="#8b4c36"/><path d="M4.8 22.5 Q5.2 17.3 14 17.3 Q22.8 17.3 23.1 22.5 Q23 27 14 27 Q5 27 4.8 22.5Z" fill="#4d90f4"/><path d="M13 18 H15 L15.6 25 L14 27 L12.4 25Z" fill="#e0303f"/><ellipse cx="13.9" cy="11.8" rx="4.2" ry="4.9" fill="#fde4da"/><path d="M9.6 10.5 Q10 6 14.2 6.4 Q12.5 9 9.6 10.5Z" fill="#8b4c36"/></svg></div>
<div class="a" style="left:1014px;top:294px;font-size:14px;color:#1a1a1a;line-height:16px"><span class="ul" style="letter-spacing:0.212px;">Marcus Thompson</span></div>
<div class="a" style="left:283px;top:326px;width:30px;text-align:center;font-size:13px;color:#9a9a9a;line-height:16px">6</div>
<div class="a" style="left:318px;top:321px;"><svg width="24" height="26" viewBox="4 1 24 26"><path d="M4.6 23 Q5 17.5 11 16.8 H17 Q23 17.5 23.4 23 Q23 27 14 27 Q5 27 4.6 23Z" fill="#34517f"/><path d="M11.2 16.8 H16.8 L14 23Z" fill="#fff"/><path d="M13.3 18.3 H14.8 L15.3 24 L14 25.8 L12.8 24Z" fill="#cf2839"/><rect x="12" y="13" width="4" height="4.5" fill="#e3ae78"/><ellipse cx="14.1" cy="10.4" rx="4.7" ry="5.4" fill="#efc08a"/><path d="M9.1 11.5 Q8.3 2.9 14 2.9 Q19.9 2.9 19.2 11.5 Q18.6 6.6 14 6.4 Q9.8 6.6 9.1 11.5Z" fill="#24385e"/></svg></div>
<div class="a" style="left:347px;top:326px;font-size:14px;color:#1a1a1a;line-height:16px"><span class="ul" style="letter-spacing:0.215px;">Chris Martinez</span></div>
<div class="a" style="left:484px;top:324px;width:126.7px;text-align:center;height:21px;line-height:23px;border-radius:4px;background:#fde0ea;color:#b0174d;font-size:12.6px">Marketing Manager</div>
<div class="a" style="left:684px;top:324px;width:74.3px;text-align:center;height:21px;line-height:23px;border-radius:4px;background:#abf3bf;color:#1f733b;font-size:12.6px">Marketing</div>
<div class="a" style="left:882px;top:322px;"><svg width="23" height="25" viewBox="4 1 24 26"><path d="M4.6 23 Q5 17.5 11 16.8 H17 Q23 17.5 23.4 23 Q23 27 14 27 Q5 27 4.6 23Z" fill="#34517f"/><path d="M11.2 16.8 H16.8 L14 23Z" fill="#fff"/><path d="M13.3 18.3 H14.8 L15.3 24 L14 25.8 L12.8 24Z" fill="#cf2839"/><rect x="12" y="13" width="4" height="4.5" fill="#e3ae78"/><ellipse cx="14.1" cy="10.4" rx="4.7" ry="5.4" fill="#efc08a"/><path d="M9.1 11.5 Q8.3 2.9 14 2.9 Q19.9 2.9 19.2 11.5 Q18.6 6.6 14 6.4 Q9.8 6.6 9.1 11.5Z" fill="#24385e"/></svg></div>
<div class="a" style="left:1014px;top:326px;font-size:14px;color:#1a1a1a;line-height:16px"><span class="ul" style="letter-spacing:0.189px;">Jessica Lee</span></div>
<div class="a" style="left:1214px;top:326px;font-size:14px;color:#1a1a1a;line-height:16px;width:192px;height:19px;overflow:hidden"><span class="ul" style="letter-spacing:0.477px;">Jordan Smith</span><span style="display:inline-block;width:17px;text-align:center">,</span><span class="ul" style="letter-spacing:0.316px;">Chris Martin</span></div>
<div class="a" style="left:283px;top:358px;width:30px;text-align:center;font-size:13px;color:#9a9a9a;line-height:16px">7</div>
<div class="a" style="left:318px;top:353px;"><svg width="24" height="26" viewBox="4 1 24 26"><path d="M5 19 Q5.5 9 8 5.5 Q10.5 2.9 14 2.9 Q17.5 2.9 20 5.5 Q22.5 9 22.7 19Z" fill="#8b4c36"/><path d="M4.8 22.5 Q5.2 17.3 14 17.3 Q22.8 17.3 23.1 22.5 Q23 27 14 27 Q5 27 4.8 22.5Z" fill="#4d90f4"/><path d="M13 18 H15 L15.6 25 L14 27 L12.4 25Z" fill="#e0303f"/><ellipse cx="13.9" cy="11.8" rx="4.2" ry="4.9" fill="#fde4da"/><path d="M9.6 10.5 Q10 6 14.2 6.4 Q12.5 9 9.6 10.5Z" fill="#8b4c36"/></svg></div>
<div class="a" style="left:347px;top:358px;font-size:14px;color:#1a1a1a;line-height:16px"><span class="ul" style="letter-spacing:0.189px;">Jessica Lee</span></div>
<div class="a" style="left:484px;top:356px;width:155.5px;text-align:center;height:21px;line-height:23px;border-radius:4px;background:#e7dcfb;color:#6650ad;font-size:12.6px">Chief Technology Officer</div>
<div class="a" style="left:684px;top:356px;width:74px;text-align:center;height:21px;line-height:23px;border-radius:4px;background:#fdcda3;color:#a24a12;font-size:12.6px">Executive</div>
<div class="a" style="left:882px;top:354px;"><svg width="23" height="25" viewBox="4 1 24 26"><path d="M5 19 Q5.5 9 8 5.5 Q10.5 2.9 14 2.9 Q17.5 2.9 20 5.5 Q22.5 9 22.7 19Z" fill="#8b4c36"/><path d="M4.8 22.5 Q5.2 17.3 14 17.3 Q22.8 17.3 23.1 22.5 Q23 27 14 27 Q5 27 4.8 22.5Z" fill="#4d90f4"/><path d="M13 18 H15 L15.6 25 L14 27 L12.4 25Z" fill="#e0303f"/><ellipse cx="13.9" cy="11.8" rx="4.2" ry="4.9" fill="#fde4da"/><path d="M9.6 10.5 Q10 6 14.2 6.4 Q12.5 9 9.6 10.5Z" fill="#8b4c36"/></svg></div>
<div class="a" style="left:1014px;top:358px;font-size:14px;color:#1a1a1a;line-height:16px"><span class="ul" style="letter-spacing:0.212px;">Marcus Thompson</span></div>
<div class="a" style="left:283px;top:390px;width:30px;text-align:center;font-size:13px;color:#9a9a9a;line-height:16px">8</div>
<div class="a" style="left:318px;top:385px;"><svg width="24" height="26" viewBox="4 1 24 26"><path d="M4.6 23 Q5 17.5 11 16.8 H17 Q23 17.5 23.4 23 Q23 27 14 27 Q5 27 4.6 23Z" fill="#34517f"/><path d="M11.2 16.8 H16.8 L14 23Z" fill="#fff"/><path d="M13.3 18.3 H14.8 L15.3 24 L14 25.8 L12.8 24Z" fill="#cf2839"/><rect x="12" y="13" width="4" height="4.5" fill="#e3ae78"/><ellipse cx="14.1" cy="10.4" rx="4.7" ry="5.4" fill="#efc08a"/><path d="M9.1 11.5 Q8.3 2.9 14 2.9 Q19.9 2.9 19.2 11.5 Q18.6 6.6 14 6.4 Q9.8 6.6 9.1 11.5Z" fill="#24385e"/></svg></div>
<div class="a" style="left:347px;top:390px;font-size:14px;color:#1a1a1a;line-height:16px"><span class="ul" style="letter-spacing:0.477px;">Jordan Smith</span></div>
<div class="a" style="left:484px;top:388px;width:121.7px;text-align:center;height:21px;line-height:23px;border-radius:4px;background:#d3ecfb;color:#2a6da0;font-size:12.6px">Content Specialist</div>
<div class="a" style="left:684px;top:388px;width:74.3px;text-align:center;height:21px;line-height:23px;border-radius:4px;background:#abf3bf;color:#1f733b;font-size:12.6px">Marketing</div>
<div class="a" style="left:882px;top:386px;"><svg width="23" height="25" viewBox="4 1 24 26"><path d="M4.6 23 Q5 17.5 11 16.8 H17 Q23 17.5 23.4 23 Q23 27 14 27 Q5 27 4.6 23Z" fill="#34517f"/><path d="M11.2 16.8 H16.8 L14 23Z" fill="#fff"/><path d="M13.3 18.3 H14.8 L15.3 24 L14 25.8 L12.8 24Z" fill="#cf2839"/><rect x="12" y="13" width="4" height="4.5" fill="#e3ae78"/><ellipse cx="14.1" cy="10.4" rx="4.7" ry="5.4" fill="#efc08a"/><path d="M9.1 11.5 Q8.3 2.9 14 2.9 Q19.9 2.9 19.2 11.5 Q18.6 6.6 14 6.4 Q9.8 6.6 9.1 11.5Z" fill="#24385e"/></svg></div>
<div class="a" style="left:1014px;top:390px;font-size:14px;color:#1a1a1a;line-height:16px"><span class="ul" style="letter-spacing:0.215px;">Chris Martinez</span></div>
<div class="a" style="left:283px;top:422px;width:30px;text-align:center;font-size:13px;color:#9a9a9a;line-height:16px">9</div>
<div class="a" style="left:318px;top:417px;"><svg width="24" height="26" viewBox="4 1 24 26"><path d="M4.6 23 Q5 17.5 11 16.8 H17 Q23 17.5 23.4 23 Q23 27 14 27 Q5 27 4.6 23Z" fill="#34517f"/><path d="M11.2 16.8 H16.8 L14 23Z" fill="#fff"/><path d="M13.3 18.3 H14.8 L15.3 24 L14 25.8 L12.8 24Z" fill="#cf2839"/><rect x="12" y="13" width="4" height="4.5" fill="#e3ae78"/><ellipse cx="14.1" cy="10.4" rx="4.7" ry="5.4" fill="#efc08a"/><path d="M9.1 11.5 Q8.3 2.9 14 2.9 Q19.9 2.9 19.2 11.5 Q18.6 6.6 14 6.4 Q9.8 6.6 9.1 11.5Z" fill="#24385e"/></svg></div>
<div class="a" style="left:347px;top:422px;font-size:14px;color:#1a1a1a;line-height:16px"><span class="ul" style="letter-spacing:0.215px;">Chris Martinez</span></div>
<div class="a" style="left:484px;top:420px;width:147px;text-align:center;height:21px;line-height:23px;border-radius:4px;background:#c6d9fb;color:#2f57a3;font-size:12.6px">Chief Marketing Officer</div>
<div class="a" style="left:684px;top:420px;width:74px;text-align:center;height:21px;line-height:23px;border-radius:4px;background:#fdcda3;color:#a24a12;font-size:12.6px">Executive</div>
<div class="a" style="left:882px;top:418px;"><svg width="23" height="25" viewBox="4 1 24 26"><path d="M4.6 23 Q5 17.5 11 16.8 H17 Q23 17.5 23.4 23 Q23 27 14 27 Q5 27 4.6 23Z" fill="#34517f"/><path d="M11.2 16.8 H16.8 L14 23Z" fill="#fff"/><path d="M13.3 18.3 H14.8 L15.3 24 L14 25.8 L12.8 24Z" fill="#cf2839"/><rect x="12" y="13" width="4" height="4.5" fill="#e3ae78"/><ellipse cx="14.1" cy="10.4" rx="4.7" ry="5.4" fill="#efc08a"/><path d="M9.1 11.5 Q8.3 2.9 14 2.9 Q19.9 2.9 19.2 11.5 Q18.6 6.6 14 6.4 Q9.8 6.6 9.1 11.5Z" fill="#24385e"/></svg></div>
<div class="a" style="left:1014px;top:422px;font-size:14px;color:#1a1a1a;line-height:16px"><span class="ul" style="letter-spacing:0.215px;">Chris Martinez</span></div>
<div class="a" style="left:283px;top:454px;width:30px;text-align:center;font-size:13px;color:#9a9a9a;line-height:16px">10</div>
<div class="a" style="left:318px;top:449px;"><svg width="24" height="26" viewBox="4 1 24 26"><path d="M5 19 Q5.5 9 8 5.5 Q10.5 2.9 14 2.9 Q17.5 2.9 20 5.5 Q22.5 9 22.7 19Z" fill="#8b4c36"/><path d="M4.8 22.5 Q5.2 17.3 14 17.3 Q22.8 17.3 23.1 22.5 Q23 27 14 27 Q5 27 4.8 22.5Z" fill="#4d90f4"/><path d="M13 18 H15 L15.6 25 L14 27 L12.4 25Z" fill="#e0303f"/><ellipse cx="13.9" cy="11.8" rx="4.2" ry="4.9" fill="#fde4da"/><path d="M9.6 10.5 Q10 6 14.2 6.4 Q12.5 9 9.6 10.5Z" fill="#8b4c36"/></svg></div>
<div class="a" style="left:347px;top:454px;font-size:14px;color:#1a1a1a;line-height:16px"><span class="ul" style="letter-spacing:0.005px;">Emily Watson</span></div>
<div class="a" style="left:484px;top:452px;width:162.8px;text-align:center;height:21px;line-height:23px;border-radius:4px;background:#fdcda3;color:#a24a12;font-size:12.6px">Senior Software Engineer</div>
<div class="a" style="left:684px;top:452px;width:86px;text-align:center;height:21px;line-height:23px;border-radius:4px;background:#e7dcfb;color:#6650ad;font-size:12.6px">Engineering</div>
<div class="a" style="left:882px;top:450px;"><svg width="23" height="25" viewBox="4 1 24 26"><path d="M5 19 Q5.5 9 8 5.5 Q10.5 2.9 14 2.9 Q17.5 2.9 20 5.5 Q22.5 9 22.7 19Z" fill="#8b4c36"/><path d="M4.8 22.5 Q5.2 17.3 14 17.3 Q22.8 17.3 23.1 22.5 Q23 27 14 27 Q5 27 4.8 22.5Z" fill="#4d90f4"/><path d="M13 18 H15 L15.6 25 L14 27 L12.4 25Z" fill="#e0303f"/><ellipse cx="13.9" cy="11.8" rx="4.2" ry="4.9" fill="#fde4da"/><path d="M9.6 10.5 Q10 6 14.2 6.4 Q12.5 9 9.6 10.5Z" fill="#8b4c36"/></svg></div>
<div class="a" style="left:1014px;top:454px;font-size:14px;color:#1a1a1a;line-height:16px"><span class="ul" style="letter-spacing:-0.006px;">Alex Rivera</span></div>
<div class="a" style="left:283px;top:486px;width:30px;text-align:center;font-size:13px;color:#9a9a9a;line-height:16px">11</div>
<div class="a" style="left:318px;top:481px;"><svg width="24" height="26" viewBox="4 1 24 26"><path d="M4.6 23 Q5 17.5 11 16.8 H17 Q23 17.5 23.4 23 Q23 27 14 27 Q5 27 4.6 23Z" fill="#34517f"/><path d="M11.2 16.8 H16.8 L14 23Z" fill="#fff"/><path d="M13.3 18.3 H14.8 L15.3 24 L14 25.8 L12.8 24Z" fill="#cf2839"/><rect x="12" y="13" width="4" height="4.5" fill="#e3ae78"/><ellipse cx="14.1" cy="10.4" rx="4.7" ry="5.4" fill="#efc08a"/><path d="M9.1 11.5 Q8.3 2.9 14 2.9 Q19.9 2.9 19.2 11.5 Q18.6 6.6 14 6.4 Q9.8 6.6 9.1 11.5Z" fill="#24385e"/></svg></div>
<div class="a" style="left:347px;top:486px;font-size:14px;color:#1a1a1a;line-height:16px"><span class="ul" style="letter-spacing:0.027px;">David Park</span></div>
<div class="a" style="left:484px;top:484px;width:162.8px;text-align:center;height:21px;line-height:23px;border-radius:4px;background:#fdcda3;color:#a24a12;font-size:12.6px">Senior Software Engineer</div>
<div class="a" style="left:684px;top:484px;width:86px;text-align:center;height:21px;line-height:23px;border-radius:4px;background:#e7dcfb;color:#6650ad;font-size:12.6px">Engineering</div>
<div class="a" style="left:882px;top:482px;"><svg width="23" height="25" viewBox="4 1 24 26"><path d="M4.6 23 Q5 17.5 11 16.8 H17 Q23 17.5 23.4 23 Q23 27 14 27 Q5 27 4.6 23Z" fill="#34517f"/><path d="M11.2 16.8 H16.8 L14 23Z" fill="#fff"/><path d="M13.3 18.3 H14.8 L15.3 24 L14 25.8 L12.8 24Z" fill="#cf2839"/><rect x="12" y="13" width="4" height="4.5" fill="#e3ae78"/><ellipse cx="14.1" cy="10.4" rx="4.7" ry="5.4" fill="#efc08a"/><path d="M9.1 11.5 Q8.3 2.9 14 2.9 Q19.9 2.9 19.2 11.5 Q18.6 6.6 14 6.4 Q9.8 6.6 9.1 11.5Z" fill="#24385e"/></svg></div>
<div class="a" style="left:1014px;top:486px;font-size:14px;color:#1a1a1a;line-height:16px"><span class="ul" style="letter-spacing:-0.006px;">Alex Rivera</span></div>
<div class="a" style="left:283px;top:518px;width:30px;text-align:center;font-size:13px;color:#9a9a9a;line-height:16px">12</div>
<div class="a" style="left:318px;top:513px;"><svg width="24" height="26" viewBox="4 1 24 26"><path d="M4.6 23 Q5 17.5 11 16.8 H17 Q23 17.5 23.4 23 Q23 27 14 27 Q5 27 4.6 23Z" fill="#34517f"/><path d="M11.2 16.8 H16.8 L14 23Z" fill="#fff"/><path d="M13.3 18.3 H14.8 L15.3 24 L14 25.8 L12.8 24Z" fill="#cf2839"/><rect x="12" y="13" width="4" height="4.5" fill="#e3ae78"/><ellipse cx="14.1" cy="10.4" rx="4.7" ry="5.4" fill="#efc08a"/><path d="M9.1 11.5 Q8.3 2.9 14 2.9 Q19.9 2.9 19.2 11.5 Q18.6 6.6 14 6.4 Q9.8 6.6 9.1 11.5Z" fill="#24385e"/></svg></div>
<div class="a" style="left:347px;top:518px;font-size:14px;color:#1a1a1a;line-height:16px"><span class="ul" style="letter-spacing:-0.006px;">Alex Rivera</span></div>
<div class="a" style="left:484px;top:516px;width:162.8px;text-align:center;height:21px;line-height:23px;border-radius:4px;background:#fdcda3;color:#a24a12;font-size:12.6px">Senior Software Engineer</div>
<div class="a" style="left:684px;top:516px;width:86px;text-align:center;height:21px;line-height:23px;border-radius:4px;background:#e7dcfb;color:#6650ad;font-size:12.6px">Engineering</div>
<div class="a" style="left:882px;top:514px;"><svg width="23" height="25" viewBox="4 1 24 26"><path d="M4.6 23 Q5 17.5 11 16.8 H17 Q23 17.5 23.4 23 Q23 27 14 27 Q5 27 4.6 23Z" fill="#34517f"/><path d="M11.2 16.8 H16.8 L14 23Z" fill="#fff"/><path d="M13.3 18.3 H14.8 L15.3 24 L14 25.8 L12.8 24Z" fill="#cf2839"/><rect x="12" y="13" width="4" height="4.5" fill="#e3ae78"/><ellipse cx="14.1" cy="10.4" rx="4.7" ry="5.4" fill="#efc08a"/><path d="M9.1 11.5 Q8.3 2.9 14 2.9 Q19.9 2.9 19.2 11.5 Q18.6 6.6 14 6.4 Q9.8 6.6 9.1 11.5Z" fill="#24385e"/></svg></div>
<div class="a" style="left:1014px;top:518px;font-size:14px;color:#1a1a1a;line-height:16px"><span class="ul" style="letter-spacing:0.212px;">Marcus Thompson</span></div>
<div class="a" style="left:283px;top:550px;width:30px;text-align:center;font-size:13px;color:#9a9a9a;line-height:16px">13</div>
<div class="a" style="left:318px;top:545px;"><svg width="24" height="26" viewBox="4 1 24 26"><path d="M5 19 Q5.5 9 8 5.5 Q10.5 2.9 14 2.9 Q17.5 2.9 20 5.5 Q22.5 9 22.7 19Z" fill="#8b4c36"/><path d="M4.8 22.5 Q5.2 17.3 14 17.3 Q22.8 17.3 23.1 22.5 Q23 27 14 27 Q5 27 4.8 22.5Z" fill="#4d90f4"/><path d="M13 18 H15 L15.6 25 L14 27 L12.4 25Z" fill="#e0303f"/><ellipse cx="13.9" cy="11.8" rx="4.2" ry="4.9" fill="#fde4da"/><path d="M9.6 10.5 Q10 6 14.2 6.4 Q12.5 9 9.6 10.5Z" fill="#8b4c36"/></svg></div>
<div class="a" style="left:347px;top:550px;font-size:14px;color:#1a1a1a;line-height:16px"><span class="ul" style="letter-spacing:0.001px;">Sarah Chen</span></div>
<div class="a" style="left:484px;top:548px;width:146.7px;text-align:center;height:21px;line-height:23px;border-radius:4px;background:#fbcfe0;color:#a5335a;font-size:12.6px">Chief Executive Officer</div>
<div class="a" style="left:684px;top:548px;width:74px;text-align:center;height:21px;line-height:23px;border-radius:4px;background:#fdcda3;color:#a24a12;font-size:12.6px">Executive</div>
<div class="a" style="left:882px;top:546px;"><svg width="23" height="25" viewBox="4 1 24 26"><path d="M5 19 Q5.5 9 8 5.5 Q10.5 2.9 14 2.9 Q17.5 2.9 20 5.5 Q22.5 9 22.7 19Z" fill="#8b4c36"/><path d="M4.8 22.5 Q5.2 17.3 14 17.3 Q22.8 17.3 23.1 22.5 Q23 27 14 27 Q5 27 4.8 22.5Z" fill="#4d90f4"/><path d="M13 18 H15 L15.6 25 L14 27 L12.4 25Z" fill="#e0303f"/><ellipse cx="13.9" cy="11.8" rx="4.2" ry="4.9" fill="#fde4da"/><path d="M9.6 10.5 Q10 6 14.2 6.4 Q12.5 9 9.6 10.5Z" fill="#8b4c36"/></svg></div>
<div class="a" style="left:1014px;top:550px;font-size:14px;color:#1a1a1a;line-height:16px"><span class="ul" style="letter-spacing:0.212px;">Marcus Thompson</span></div>
<div class="a" style="left:1214px;top:550px;font-size:14px;color:#1a1a1a;line-height:16px;width:192px;height:19px;overflow:hidden"><span class="ul" style="letter-spacing:-0.006px;">Alex Rivera</span><span style="display:inline-block;width:17px;text-align:center">,</span><span class="ul" style="letter-spacing:0.189px;">Jessica Lee</span></div>
<div class="a" style="left:100px;top:861px;width:155px;height:20px;background:linear-gradient(rgba(0,0,0,0.0),rgba(0,0,0,0.05));border-radius:30px 0 0 0"></div>
<div class="a" style="left:255px;top:860px;width:1553px;height:22px;background:linear-gradient(#f2f2f2,#e7e7e7);border-radius:0 40px 0 0"></div>
<div class="a" style="left:950px;top:839px;width:92px;height:27px;line-height:27px;text-align:center;font-size:14px;color:#bdbdbd;background:#f8f8f8;border:1px solid #eee;border-radius:5px">App Store</div>
<div class="a" style="left:0px;top:882px;width:1918px;height:2px;background:#0d0d0d"></div>
<div class="a" style="left:0px;top:884px;width:1918px;height:2px;background:linear-gradient(90deg,#2a2a2a 0%,#6f7a6e 8%,#737d72 30%,#7a7466 45%,#707b70 60%,#6a6a62 100%)"></div>
<div class="a" style="left:0px;top:875px;"><svg width="10" height="8" viewBox="0 0 10 8"><path d="M0 0 V8 H10 Q1 8 0 0Z" fill="#0d0d0d"/></svg></div>
<div class="a" style="left:1908px;top:875px;"><svg width="10" height="8" viewBox="0 0 10 8"><path d="M10 0 V8 H0 Q9 8 10 0Z" fill="#0d0d0d"/></svg></div>
<div class="a" style="left:1855px;top:818px;"><svg width="50" height="50" viewBox="0 0 50 50"><circle cx="24.7" cy="24.5" r="24" fill="#fff" stroke="#e8b547" stroke-width="1.6"/><clipPath id="cc"><circle cx="24.7" cy="24.5" r="23.2"/></clipPath><g clip-path="url(#cc)">
<path d="M8 50 Q10 36 26 35.5 Q41 36 43 50Z" fill="#1b4380"/>
<path d="M22 29 H30 V36.5 Q26 38.5 22 36.5Z" fill="#c8906a"/>
<path d="M11 32 Q13 28 13 22 Q12 4 26 4 Q40 4 39 22 Q39 28 41 32 Q36 34 34 30 L34 16 Q26 12 18 16 L18 30 Q16 34 11 32Z" fill="#2e1a10"/>
<ellipse cx="26" cy="21.5" rx="8.6" ry="11" fill="#e9ae88"/>
<path d="M17 18 Q19 8 27 9 Q34 10 35 18 Q30 12 17 18Z" fill="#2e1a10"/>
<path d="M20 19.5 Q22 18.5 24 19.5 M28 19.5 Q30 18.5 32 19.5" fill="none" stroke="#3a2418" stroke-width="0.8"/>
<circle cx="22.2" cy="21.8" r="1.1" fill="#3a2418"/><circle cx="29.8" cy="21.8" r="1.1" fill="#3a2418"/>
<path d="M23 27.5 Q26 29.5 29 27.5" fill="none" stroke="#b05a45" stroke-width="0.9"/>
</g></svg></div>
</body></html>
